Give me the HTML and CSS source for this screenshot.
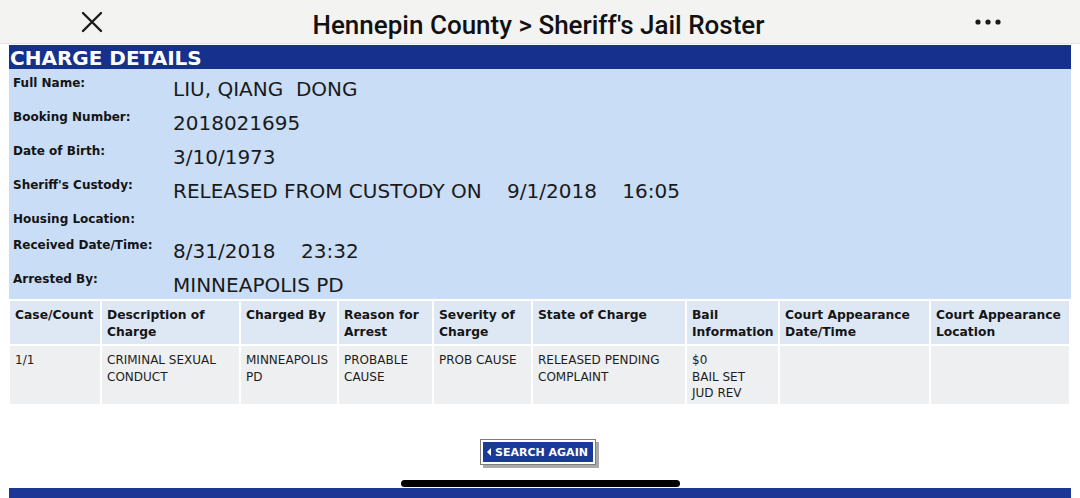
FILE: index.html
```html
<!DOCTYPE html>
<html>
<head>
<meta charset="utf-8">
<link rel="stylesheet" href="styles.css">
</head>
<body>
<div class="nav">
  <svg class="close" width="22" height="22" viewBox="0 0 22 22"><path d="M2 2 L20 20 M20 2 L2 20" stroke="#1b1b1b" stroke-width="2.4" stroke-linecap="round" fill="none"/></svg>
  <div class="title">Hennepin County &gt; Sheriff's Jail Roster</div>
  <svg class="more" width="28" height="8" viewBox="0 0 28 8"><circle cx="4" cy="4" r="2.6" fill="#1b1b1b"/><circle cx="14" cy="4" r="2.6" fill="#1b1b1b"/><circle cx="24" cy="4" r="2.6" fill="#1b1b1b"/></svg>
</div>
<div class="page">
  <div class="section-head">CHARGE DETAILS</div>
  <div class="details">
    <div class="row"><div class="label">Full Name:</div><div class="value">LIU, QIANG  DONG</div></div>
    <div class="row"><div class="label">Booking Number:</div><div class="value">2018021695</div></div>
    <div class="row"><div class="label">Date of Birth:</div><div class="value">3/10/1973</div></div>
    <div class="row"><div class="label">Sheriff's Custody:</div><div class="value">RELEASED FROM CUSTODY ON    9/1/2018    16:05</div></div>
    <div class="row row-short"><div class="label">Housing Location:</div><div class="value"></div></div>
    <div class="row"><div class="label">Received Date/Time:</div><div class="value">8/31/2018    23:32</div></div>
    <div class="row row-last"><div class="label">Arrested By:</div><div class="value">MINNEAPOLIS PD</div></div>
  </div>
  <div class="charges">
    <div class="th">Case/Count</div>
    <div class="th">Description of Charge</div>
    <div class="th">Charged By</div>
    <div class="th">Reason for Arrest</div>
    <div class="th">Severity of Charge</div>
    <div class="th">State of Charge</div>
    <div class="th">Bail Information</div>
    <div class="th">Court Appearance Date/Time</div>
    <div class="th">Court Appearance Location</div>
    <div class="td">1/1</div>
    <div class="td">CRIMINAL SEXUAL CONDUCT</div>
    <div class="td">MINNEAPOLIS PD</div>
    <div class="td">PROBABLE CAUSE</div>
    <div class="td">PROB CAUSE</div>
    <div class="td">RELEASED PENDING COMPLAINT</div>
    <div class="td">$0<br>BAIL SET<br>JUD REV</div>
    <div class="td"></div>
    <div class="td"></div>
  </div>
  <div class="actions">
    <button class="search-btn"><span class="arrow"></span>SEARCH AGAIN</button>
  </div>
  <div class="footer-bar"></div>
</div>
<div class="home-indicator"></div>
</body>
</html>
```
FILE: styles.css
```css
html, body {
  margin: 0;
  padding: 0;
  background: #ffffff;
}
body {
  width: 1080px;
  height: 498px;
  overflow: hidden;
  position: relative;
  font-family: "DejaVu Sans", Verdana, sans-serif;
}
.nav {
  height: 43px;
  background: #f3f3f1;
  border-bottom: 1px solid #e2e4ea;
  display: flex;
  align-items: center;
  justify-content: space-between;
  padding: 0 78px 0 81px;
}
.close {
  display: block;
  margin-top: 1px;
}
.title {
  font-family: Roboto, "Liberation Sans", Arial, sans-serif;
  font-weight: 500;
  font-size: 26px;
  color: #111111;
  margin-top: 6px;
}
.more {
  display: block;
}
.page {
  padding: 1px 9px 0 9px;
}
.section-head {
  height: 24px;
  background: #15318d;
  color: #ffffff;
  font-weight: bold;
  font-size: 20px;
  line-height: 26px;
  padding-left: 1px;
}
.details {
  background: #c9ddf7;
  padding: 3px 0 2px 0;
}
.row {
  display: flex;
  align-items: flex-start;
  height: 34px;
}
.row-short {
  height: 26px;
}
.row-last {
  height: 29px;
}
.label {
  width: 160px;
  padding-left: 4px;
  padding-top: 3px;
  font-weight: bold;
  font-size: 12px;
  line-height: 16px;
  color: #141414;
}
.value {
  padding-top: 5px;
  font-size: 20px;
  line-height: 24px;
  color: #1a1a1a;
  white-space: pre;
}
.charges {
  display: grid;
  grid-template-columns: 90px 137px 96px 93px 97px 152px 91px 149px 138px;
  grid-template-rows: 43px 58px;
  gap: 2px;
  padding: 2px 1px 0 1px;
}
.th {
  background: #dee8f5;
  font-weight: bold;
  font-size: 12.3px;
  line-height: 17px;
  color: #151515;
  padding: 6px 6px 0 5px;
}
.td {
  background: #eeeff1;
  font-size: 12px;
  line-height: 16.5px;
  color: #1d1d1d;
  padding: 6px 6px 0 5px;
}
.actions {
  display: flex;
  justify-content: center;
  padding-top: 35px;
  margin-right: 4px;
}
.search-btn {
  display: flex;
  align-items: center;
  gap: 4px;
  height: 26px;
  margin: 0;
  padding: 0 7px 0 6px;
  background: #1a3a97;
  color: #ffffff;
  font-family: "DejaVu Sans", Verdana, sans-serif;
  font-weight: bold;
  font-size: 11px;
  border: 1px solid #7d7d7d;
  box-shadow: inset 0 0 0 2px #ffffff, 3px 3px 0 #a9a9a9;
  cursor: pointer;
}
.arrow {
  width: 0;
  height: 0;
  border-top: 4px solid transparent;
  border-bottom: 4px solid transparent;
  border-right: 4px solid #ffffff;
}
.footer-bar {
  margin-top: 23px;
  height: 10px;
  background: #1b3695;
}
.home-indicator {
  position: absolute;
  left: 401px;
  top: 480px;
  width: 279px;
  height: 7px;
  border-radius: 4px;
  background: #000000;
}
```
